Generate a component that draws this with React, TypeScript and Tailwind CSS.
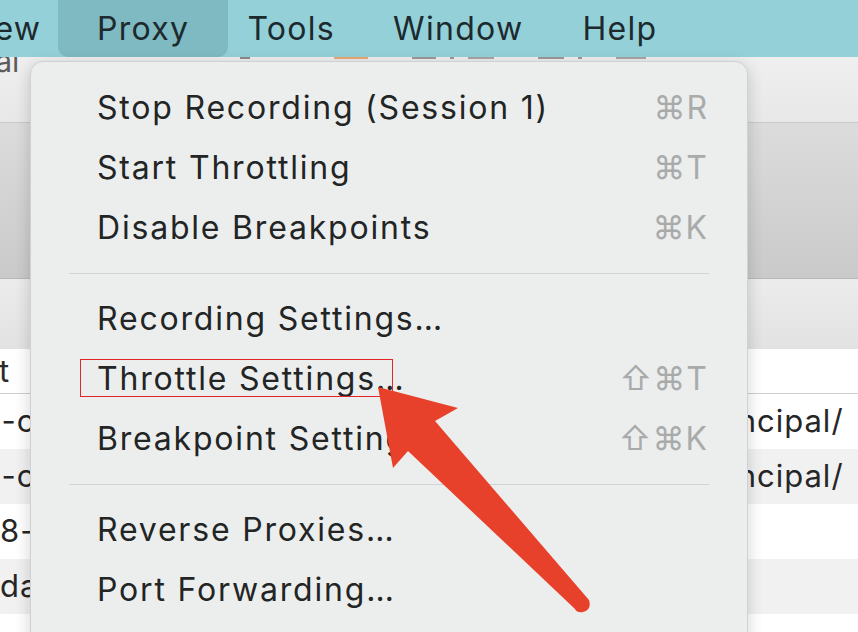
import React from "react";

const items: (string[] | null)[] = [
  ["Stop Recording (Session 1)", "⌘R"],
  ["Start Throttling", "⌘T"],
  ["Disable Breakpoints", "⌘K"],
  null,
  ["Recording Settings…", ""],
  ["Throttle Settings…", "⇧⌘T"],
  ["Breakpoint Settings…", "⇧⌘K"],
  null,
  ["Reverse Proxies…", ""],
  ["Port Forwarding…", ""],
];

const rows = [
  { left: "1-cd", offset: "-ml-[12px]", right: "principal/", shade: false },
  { left: "1-cd", offset: "-ml-[12px]", right: "principal/", shade: true },
  { left: "8-", offset: "ml-0", right: "", shade: false },
  { left: "da", offset: "ml-0", right: "", shade: true },
  { left: "", offset: "ml-0", right: "", shade: false },
];

export default function App() {
  return (
    <div className="relative w-[858px] h-[632px] overflow-hidden bg-white font-['Inter',_'Noto_Sans',_sans-serif]">
      {/* menu bar */}
      <div className="relative z-10 flex h-[57px] items-center bg-[#94d0d8] text-[32px] tracking-[1.3px] text-[#1c2a2e]">
        <span className="-ml-[38px] w-[96px] shrink-0">View</span>
        <span className="flex h-[57px] items-center rounded-b-[10px] bg-[#7fb9c1] px-[39px]">Proxy</span>
        <span className="ml-[19px]">Tools</span>
        <span className="ml-[58px]">Window</span>
        <span className="ml-[59px]">Help</span>
      </div>

      {/* app behind the menu */}
      <div className="flex flex-col">
        <div className="relative h-[66px] overflow-hidden border-b border-[#c9c9c9] bg-gradient-to-b from-[#efefef] to-[#e8e8e8]">
          <span className="absolute -top-[18px] -left-[24px] text-[30px] text-[#5b5b5b]">Val</span>
          <div className="absolute top-0 left-[240px] flex gap-[14px] items-start">
            <span className="h-[2px] w-[10px] bg-[#8a8a8a]" />
            <span className="ml-[70px] h-[2px] w-[34px] bg-[#eaa879]" />
            <span className="ml-[30px] h-[2px] w-[24px] bg-[#9a9a9a]" />
            <span className="h-[2px] w-[4px] bg-[#9a9a9a]" />
            <span className="h-[2px] w-[26px] bg-[#a5a5a5]" />
            <span className="ml-[30px] h-[2px] w-[26px] bg-[#9a9a9a]" />
            <span className="h-[2px] w-[4px] bg-[#9a9a9a]" />
            <span className="ml-[20px] h-[2px] w-[30px] bg-[#a5a5a5]" />
          </div>
        </div>
        <div className="h-[156px] border-b border-[#b9b9b9] bg-gradient-to-b from-[#dcdcdc] to-[#cacaca]" />
        <div className="h-[70px] bg-gradient-to-b from-[#ececec] to-[#e2e2e2]" />
        <div className="flex h-[45px] items-center border-b border-[#cfcfcf] bg-white text-[31px] tracking-[1px] text-[#2a2a2a]">
          <span className="-ml-[62px]">Host</span>
        </div>
        {rows.map((r, i) => (
          <div
            key={i}
            className={`relative flex h-[55px] items-center text-[31px] tracking-[1px] text-[#262626] ${r.shade ? "bg-[#f1f1f1]" : "bg-white"}`}
          >
            <span className={r.offset}>{r.left}</span>
            <span className="absolute left-[696px]">{r.right}</span>
          </div>
        ))}
      </div>

      {/* dropdown menu */}
      <div className="absolute left-[30px] top-[61px] z-20 w-[718px] h-[600px] rounded-[13px] border border-[#cfd2d2] bg-[#eceeee] pt-[16px] shadow-[0_4px_16px_rgba(0,0,0,0.18)]">
        {items.map((it, i) =>
          it ? (
            <div key={i} className="flex h-[60px] items-center justify-between pl-[66px] pr-[39px] text-[32px] text-[#232525]">
              <span className="tracking-[1.8px]">{it[0]}</span>
              <span className="tracking-[1px] text-[#a9abab]">{it[1]}</span>
            </div>
          ) : (
            <div key={i} className="px-[38px] py-[15px]">
              <div className="h-[1px] bg-[#d1d4d4]" />
            </div>
          )
        )}
      </div>

      {/* annotation */}
      <div className="absolute left-[80px] top-[359px] z-30 h-[38px] w-[313px] border-[1.5px] border-[#e3262a]" />
      <svg className="absolute inset-0 z-30" width="858" height="632" viewBox="0 0 858 632">
        <path
          d="M378 387 L458 408 L435 421 L589 600 Q592 610 583 612 Q577 613 575 609 L408 451 L393 468 Z"
          fill="#e8412b"
        />
      </svg>
    </div>
  );
}
